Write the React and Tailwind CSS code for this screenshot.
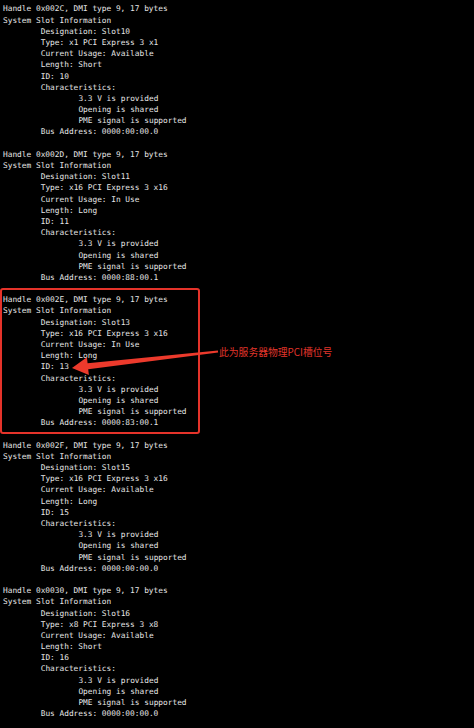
const slots = [
  { handle: "0x002C", name: "Slot10", type: "x1 PCI Express 3 x1", usage: "Available", length: "Short", id: "10", bus: "0000:00:00.0" },
  { handle: "0x002D", name: "Slot11", type: "x16 PCI Express 3 x16", usage: "In Use", length: "Long", id: "11", bus: "0000:88:00.1" },
  { handle: "0x002E", name: "Slot13", type: "x16 PCI Express 3 x16", usage: "In Use", length: "Long", id: "13", bus: "0000:83:00.1", marked: true },
  { handle: "0x002F", name: "Slot15", type: "x16 PCI Express 3 x16", usage: "Available", length: "Long", id: "15", bus: "0000:00:00.0" },
  { handle: "0x0030", name: "Slot16", type: "x8 PCI Express 3 x8", usage: "Available", length: "Short", id: "16", bus: "0000:00:00.0" },
];

const Line = ({ indent = 0, children }) => {
  const pad = ["pl-[3px]", "pl-[40.7px]", "pl-[78.4px]"][indent];
  return <div className={`h-[11.2px] leading-[11.2px] whitespace-pre ${pad}`}>{children}</div>;
};

const SlotBlock = ({ slot }) => (
  <div className="relative">
    <Line>Handle {slot.handle}, DMI type 9, 17 bytes</Line>
    <Line>System Slot Information</Line>
    <Line indent={1}>Designation: {slot.name}</Line>
    <Line indent={1}>Type: {slot.type}</Line>
    <Line indent={1}>Current Usage: {slot.usage}</Line>
    <Line indent={1}>Length: {slot.length}</Line>
    <Line indent={1}>ID: {slot.id}</Line>
    <Line indent={1}>Characteristics:</Line>
    <Line indent={2}>3.3 V is provided</Line>
    <Line indent={2}>Opening is shared</Line>
    <Line indent={2}>PME signal is supported</Line>
    <Line indent={1}>Bus Address: {slot.bus}</Line>
    {slot.marked && (
      <div className="absolute left-0 top-[-6px] w-[200px] h-[146px] rounded-[3px] border-2 border-[#e5332a]" />
    )}
  </div>
);

export default function App() {
  return (
    <div className="relative w-[474px] h-[728px] overflow-hidden bg-black text-[#e6e6e6] text-[7.82px] pt-[3.4px] font-['DejaVu_Sans_Mono',monospace]">
      {slots.map((slot, i) => (
        <div key={slot.handle}>
          <SlotBlock slot={slot} />
          {i < slots.length - 1 && <div className="h-[11.2px]" />}
        </div>
      ))}

      <svg className="absolute left-0 top-0" width="474" height="728" viewBox="0 0 474 728">
        <polygon
          points="217.9,350.5 87.6,363.2 86.9,357.3 72,368 88.9,375.1 88.2,369.2 218.1,352.5"
          fill="#ec3a2c"
        />
      </svg>
      <div className="absolute left-[219px] top-[345px] text-[9.8px] leading-[14px] text-[#e0352b] font-['Noto_Sans_CJK_SC',sans-serif]">
        此为服务器物理PCI槽位号
      </div>
    </div>
  );
}
